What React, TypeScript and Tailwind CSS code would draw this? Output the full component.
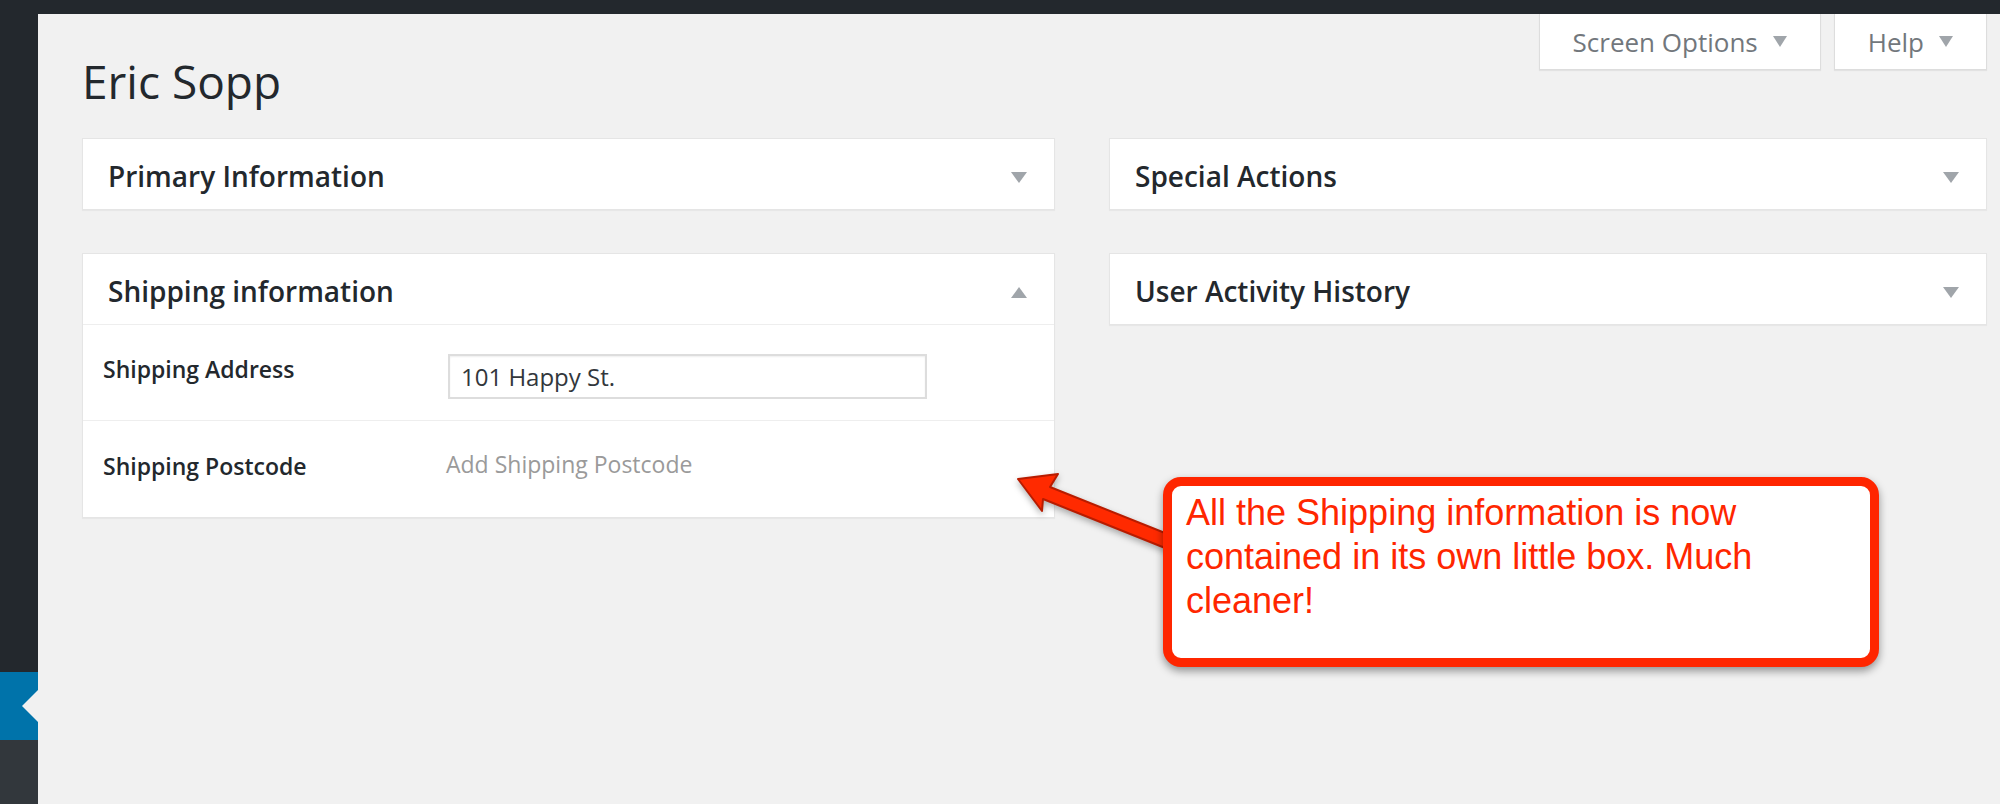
import React from "react";

function Caret({ up = false, w = 16, h = 11 }: { up?: boolean; w?: number; h?: number }) {
  return (
    <svg width={w} height={h} viewBox={`0 0 ${w} ${h}`} className="shrink-0">
      <polygon points={up ? `0,${h} ${w},${h} ${w / 2},0` : `0,0 ${w},0 ${w / 2},${h}`} fill="#a0a5aa" />
    </svg>
  );
}

function PanelHeader({ title, open = false }: { title: string; open?: boolean }) {
  return (
    <div
      className={
        "flex items-center justify-between pl-[25px] pr-[27px]" +
        (open ? " h-[71px] border-b border-[#eeeeee]" : " h-[70px]")
      }
    >
      <h2 className="pt-[4px] text-[28px] font-semibold leading-[38px] text-[#23282d]">{title}</h2>
      <div className="mt-[6px]">
        <Caret up={open} />
      </div>
    </div>
  );
}

function Panel({ title, open, children }: { title: string; open?: boolean; children?: React.ReactNode }) {
  return (
    <div className="border border-[#e5e5e5] bg-white shadow-[0_1px_1px_rgba(0,0,0,0.04)]">
      <PanelHeader title={title} open={open} />
      {children}
    </div>
  );
}

function TopButton({ label }: { label: string }) {
  return (
    <div className="flex h-[56px] items-center gap-[15px] border border-t-0 border-[#dddddd] bg-white pl-[33px] pr-[33px] shadow-[0_1px_1px_rgba(0,0,0,0.06)]">
      <span className="pt-[1px] text-[26px] leading-[36px] text-[#72777c]">{label}</span>
      <Caret w={14} h={11} />
    </div>
  );
}

export default function App() {
  return (
    <div className="relative flex h-[804px] w-[2000px] flex-col overflow-hidden bg-[#f1f1f1] font-['Open_Sans',sans-serif]">
      {/* admin bar */}
      <div className="h-[14px] shrink-0 bg-[#23282d]" />

      <div className="flex flex-1">
        {/* sidebar */}
        <div className="flex w-[38px] shrink-0 flex-col">
          <div className="flex-1 bg-[#23282d]" />
          <div className="flex h-[68px] items-center justify-end bg-[#0073aa]">
            <svg width="16" height="32" viewBox="0 0 16 32">
              <polygon points="16,0 16,32 0,16" fill="#f1f1f1" />
            </svg>
          </div>
          <div className="h-[64px] bg-[#32373c]" />
        </div>

        {/* content */}
        <div className="flex-1 pl-[44px] pr-[13px]">
          <div className="flex items-start justify-between">
            <h1 className="mt-[37px] text-[46px] font-normal leading-[60px] text-[#23282d]">Eric Sopp</h1>
            <div className="flex gap-[13px]">
              <TopButton label="Screen Options" />
              <TopButton label="Help" />
            </div>
          </div>

          <div className="mt-[27px] grid grid-cols-[973px_878px] gap-x-[54px]">
            <div className="flex flex-col gap-[43px]">
              <Panel title="Primary Information" />
              <Panel title="Shipping information" open>
                <div className="flex h-[96px] items-start border-b border-[#eeeeee] pl-[20px] pt-[29px]">
                  <label className="w-[345px] shrink-0 text-[23px] font-semibold leading-[31px] text-[#23282d]">
                    Shipping Address
                  </label>
                  <input
                    readOnly
                    value="101 Happy St."
                    className="h-[45px] w-[479px] border-2 border-[#dddddd] bg-white px-[11px] text-[24px] leading-[31px] text-[#32373c] shadow-[inset_0_1px_2px_rgba(0,0,0,0.07)] outline-none"
                  />
                </div>
                <div className="flex h-[96px] items-start pl-[20px] pt-[30px]">
                  <span className="w-[343px] shrink-0 text-[23px] font-semibold leading-[31px] text-[#23282d]">
                    Shipping Postcode
                  </span>
                  <span className="-mt-[2px] text-[23px] leading-[31px] text-[#9a9a9a]">Add Shipping Postcode</span>
                </div>
              </Panel>
            </div>
            <div className="flex flex-col gap-[43px]">
              <Panel title="Special Actions" />
              <Panel title="User Activity History" />
            </div>
          </div>
        </div>
      </div>

      {/* annotation arrow */}
      <svg
        width="200"
        height="110"
        viewBox="0 0 200 110"
        className="absolute left-[1000px] top-[460px] drop-shadow-[0_3px_3px_rgba(0,0,0,0.3)]"
      >
        <polygon
          points="18,19 58,14 50,27 195,85 195,100 43,39 42,51"
          fill="#ff2a00"
          stroke="#b81c00"
          strokeWidth="2"
          strokeLinejoin="round"
        />
      </svg>

      {/* annotation callout */}
      <div className="absolute left-[1163px] top-[477px] h-[190px] w-[716px] rounded-[18px] border-[9px] border-[#ff2600] bg-white pl-[14px] pt-[5px] shadow-[0_4px_8px_rgba(0,0,0,0.4)]">
        <p className="font-['Liberation_Sans',Arial,sans-serif] text-[36px] leading-[44px] text-[#ff2600]">
          All the Shipping information is now
          <br />
          contained in its own little box. Much
          <br />
          cleaner!
        </p>
      </div>
    </div>
  );
}
